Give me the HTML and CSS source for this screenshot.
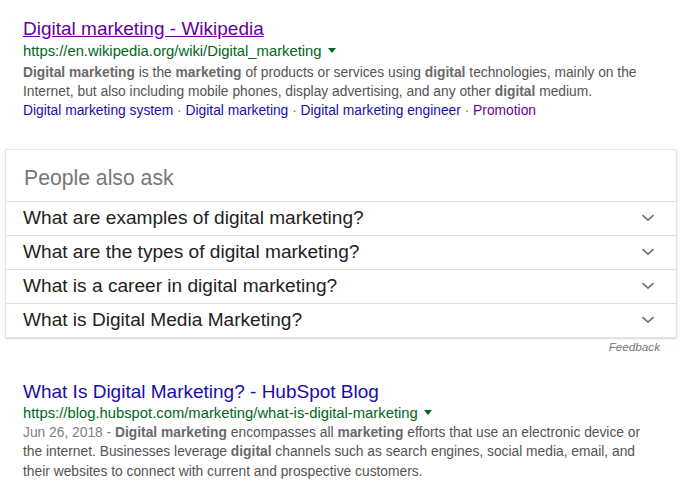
FILE: index.html
```html
<!DOCTYPE html>
<html>
<head>
<meta charset="utf-8">
<link rel="stylesheet" href="styles.css">
</head>
<body>
<div class="page">
  <div class="result first">
    <a class="title visited" href="#">Digital marketing - Wikipedia</a>
    <div class="url">https://en.wikipedia.org/wiki/Digital_marketing<span class="caret"></span></div>
    <div class="snippet"><b>Digital marketing</b> is the <b>marketing</b> of products or services using <b>digital</b> <span>technologies, mainly on the</span> <span>Internet, but also including mobile phones, display advertising, and any other</span> <b>digital</b> medium.<br><a class="link" href="#">Digital marketing system</a><span class="dot"> · </span><a class="link" href="#">Digital marketing</a><span class="dot"> · </span><a class="link" href="#">Digital marketing engineer</a><span class="dot"> · </span><a class="link visited" href="#">Promotion</a></div>
  </div>

  <div class="paa">
    <div class="paa-head">People also ask</div>
    <div class="q"><span>What are examples of digital marketing?</span><svg class="chev" width="14" height="8" viewBox="0 0 14 8"><path d="M1.5 1.2l5.5 5 5.5-5" fill="none" stroke="#757575" stroke-width="1.7"/></svg></div>
    <div class="q"><span>What are the types of digital marketing?</span><svg class="chev" width="14" height="8" viewBox="0 0 14 8"><path d="M1.5 1.2l5.5 5 5.5-5" fill="none" stroke="#757575" stroke-width="1.7"/></svg></div>
    <div class="q"><span>What is a career in digital marketing?</span><svg class="chev" width="14" height="8" viewBox="0 0 14 8"><path d="M1.5 1.2l5.5 5 5.5-5" fill="none" stroke="#757575" stroke-width="1.7"/></svg></div>
    <div class="q"><span>What is Digital Media Marketing?</span><svg class="chev" width="14" height="8" viewBox="0 0 14 8"><path d="M1.5 1.2l5.5 5 5.5-5" fill="none" stroke="#757575" stroke-width="1.7"/></svg></div>
  </div>
  <div class="feedback">Feedback</div>

  <div class="result second">
    <a class="title" href="#">What Is Digital Marketing? - HubSpot Blog</a>
    <div class="url">https://blog.hubspot.com/marketing/what-is-digital-marketing<span class="caret"></span></div>
    <div class="snippet"><span class="date">Jun 26, 2018 - </span><b>Digital marketing</b> encompasses all <b>marketing</b> <span>efforts that use an electronic device or</span> <span>the internet. Businesses leverage</span> <b>digital</b> <span>channels such as search engines, social media, email, and</span> <span>their websites to connect with current and prospective customers.</span></div>
  </div>
</div>
</body>
</html>
```
FILE: styles.css
```css
html, body {
  margin: 0;
  padding: 0;
  background: #fff;
}
body {
  font-family: Arial, "Liberation Sans", sans-serif;
}
.page {
  padding-top: 17px;
  width: 687px;
  box-sizing: border-box;
}
.result {
  padding-left: 23px;
  padding-right: 20px;
}
.title {
  display: block;
  font-size: 19px;
  line-height: 24px;
  color: #1a0dab;
  text-decoration: none;
  white-space: nowrap;
}
.first .title {
  color: #660099;
  text-decoration: underline;
}
.url {
  font-size: 14.8px;
  line-height: 21px;
  color: #006621;
  white-space: nowrap;
}
.caret {
  display: inline-block;
  width: 0;
  height: 0;
  border-left: 4px solid transparent;
  border-right: 4px solid transparent;
  border-top: 5px solid #006621;
  margin-left: 6px;
  vertical-align: 3px;
}
.snippet {
  margin-top: 1.4px;
  font-size: 13.8px;
  line-height: 19px;
  color: #545454;
  width: 630px;
}
.snippet b {
  color: #6a6a6a;
  font-weight: bold;
}
.date {
  color: #808080;
}
.link {
  color: #1a0dab;
  text-decoration: none;
}
.link.visited {
  color: #660099;
}
.dot {
  color: #777;
}
.paa {
  margin: 28.6px 10px 0 5px;
  border: 1px solid #e4e4e4;
  border-radius: 2px;
  box-shadow: 0 1px 2px rgba(0, 0, 0, 0.16);
  background: #fff;
}
.paa-head {
  font-size: 21.2px;
  line-height: 28px;
  padding: 13.6px 18px 9.4px;
  color: #777;
}
.q {
  display: flex;
  align-items: center;
  justify-content: space-between;
  border-top: 1px solid #e0e0e0;
  font-size: 19.1px;
  line-height: 31px;
  padding: 0 21px 2px 17px;
  color: #222;
}
.chev {
  display: block;
  margin-top: 2px;
}
.feedback {
  text-align: right;
  padding-right: 27px;
  font-size: 11.7px;
  line-height: 16px;
  font-style: italic;
  color: #777;
  margin-top: 0.6px;
}
.second {
  margin-top: 25px;
}
.second .url {
  line-height: 20px;
  margin-top: -1px;
}
.second .snippet {
  margin-top: 0;
  line-height: 19.5px;
}
```
